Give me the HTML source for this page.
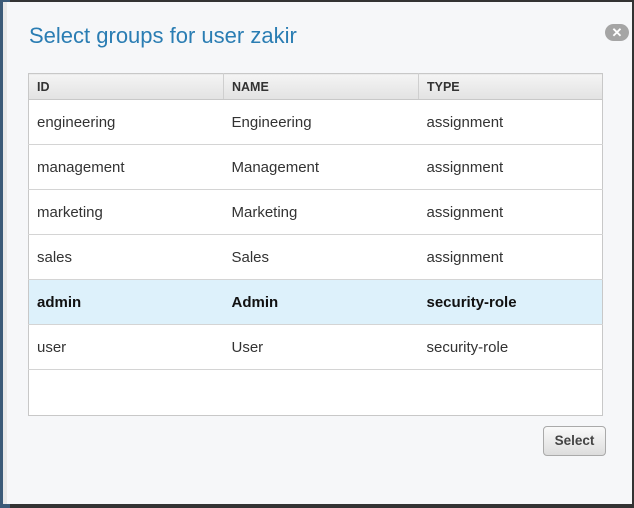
<!DOCTYPE html><html><head><style>
body{margin:0;width:634px;height:508px;overflow:hidden;background:#333;font-family:"Liberation Sans",sans-serif;position:relative}
.bg{position:absolute;left:0;top:0;width:10px;height:508px;background:#3b5a78}
.dlg{position:absolute;left:3px;top:2px;width:625px;height:502px;background:#f6f7f9;border-left:4px solid #e8e8e8}
h1{position:absolute;left:22px;top:21px;margin:0;font-weight:normal;font-size:22px;color:#2a7db3}
.x{position:absolute;left:598px;top:22px;width:24px;height:17px;border-radius:9px;background:#a5a5a5;color:#fff;font-size:13px;text-align:center;line-height:17px;font-weight:bold}
table{position:absolute;left:21px;top:71px;width:575px;border-collapse:collapse;background:#fff;border:1px solid #c8c8c8}
th{height:25px;text-align:left;font-size:12.5px;color:#333;background:linear-gradient(#f4f4f4,#e2e2e2);border-right:1px solid #cfcfcf;border-bottom:1px solid #c8c8c8;padding:0 8px}
td{height:44px;border-bottom:1px solid #d4d4d4;padding:0 8px;font-size:15px;color:#333}
tr.sel td{background:#ddf1fb;font-weight:bold;color:#111}
td.e{height:45px;border-bottom:none}
.btn{position:absolute;left:536px;top:424px;width:61px;height:28px;border:1px solid #aaa;border-radius:4px;background:linear-gradient(#fafafa,#ddd);font-size:13.5px;font-weight:bold;color:#444;text-align:center;line-height:28px}
</style></head><body><div class="bg"></div>
<div class="dlg"><h1>Select groups for user zakir</h1><div class="x">✕</div>
<table><tr><th style="width:178px">ID</th><th style="width:178px">NAME</th><th style="border-right:none">TYPE</th></tr>
<tr><td>engineering</td><td>Engineering</td><td>assignment</td></tr>
<tr><td>management</td><td>Management</td><td>assignment</td></tr>
<tr><td>marketing</td><td>Marketing</td><td>assignment</td></tr>
<tr><td>sales</td><td>Sales</td><td>assignment</td></tr>
<tr class="sel"><td>admin</td><td>Admin</td><td>security-role</td></tr>
<tr><td>user</td><td>User</td><td>security-role</td></tr>
<tr><td class="e" colspan="3"></td></tr></table>
<div class="btn">Select</div></div>
</body></html>
